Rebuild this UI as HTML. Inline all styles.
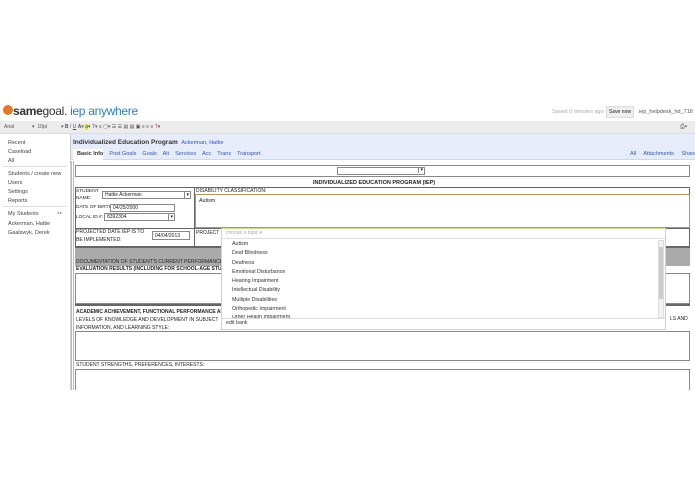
<!DOCTYPE html>
<html><head><meta charset="utf-8"><style>
*{margin:0;padding:0;box-sizing:border-box}
body{width:695px;height:494px;background:#fff;font-family:"Liberation Sans",Arial,sans-serif;font-size:6px;color:#222;position:relative;overflow:hidden}
.a{position:absolute;white-space:nowrap}
.bl{color:#3355bb}
.b{font-weight:bold}
.box{position:absolute;border:1px solid #888;background:#fff}
</style></head><body>
<!-- header -->
<div class="a" style="left:3px;top:105px;width:10px;height:10px;border-radius:50%;background:#e07a2a"></div>
<div class="a" style="left:13px;top:104px;font-size:12px;letter-spacing:-0.3px"><span class="b" style="color:#333">same</span><span style="color:#333">goal.</span><span style="color:#2e7bc4"> iep anywhere</span></div>
<div class="a" style="left:552px;top:109px;color:#aaa;font-size:5.5px">Saved 0 minutes ago</div>
<div class="a" style="left:606px;top:106px;width:28px;height:12px;background:#eee;border:1px solid #ddd;font-size:5px;line-height:10px;text-align:center">Save now</div>
<div class="a" style="left:639px;top:109px;color:#555;font-size:5.5px">iep_helpdesk_hd_718</div>
<!-- toolbar -->
<div class="a" style="left:0;top:121px;width:695px;height:13px;background:#ececec;border-bottom:1px solid #ddd"></div>
<div class="a" style="left:4px;top:124px;color:#555;font-size:5px">Arial&nbsp;&nbsp;&nbsp;&nbsp;&nbsp;&nbsp;&nbsp;&nbsp;&nbsp;&nbsp;&nbsp;&nbsp;&nbsp;▾ &nbsp;10pt&nbsp;&nbsp;&nbsp;&nbsp;&nbsp;&nbsp;&nbsp;&nbsp;&nbsp;&nbsp;▾ <b>B</b> <i>I</i> <u>U</u> <b>A</b>▾ <span style="background:#ee0">a</span>▾ <i>T</i>▾ ≡ ▢▾ ☰ ☰ ▤ ▤ ▣ ≡ ≡ ≡ <span style="color:#c33">T</span>▾</div>
<div class="a" style="left:680px;top:124px;color:#555;font-size:6px">⎙▾</div>
<!-- sidebar -->
<div class="a" style="left:70px;top:134px;width:1px;height:256px;background:#ccc"></div>
<div class="a" style="left:8px;top:139px;line-height:9px;color:#444;font-size:5.5px">Recent<br>Caseload<br>All</div>
<div class="a" style="left:3px;top:166px;width:64px;height:1px;background:#ddd"></div>
<div class="a" style="left:8px;top:170px;line-height:9px;color:#444;font-size:5.5px">Students / create new<br>Users<br>Settings<br>Reports</div>
<div class="a" style="left:3px;top:206px;width:64px;height:1px;background:#ddd"></div>
<div class="a" style="left:8px;top:210px;line-height:9.5px;color:#444;font-size:5.5px">My Students<br>Ackerman, Hattie<br>Gaalswyk, Derek</div>
<div class="a" style="left:57px;top:210px;font-size:4px;color:#777">◂ ▸</div>
<!-- main header -->
<div class="a" style="left:71px;top:134px;width:624px;height:26px;background:#e6ecf9;border-bottom:1px solid #cdd"></div>
<div class="a" style="left:73px;top:139px;font-size:6.5px"><b style="color:#333">Individualized Education Program</b> &nbsp;<span class="bl" style="font-size:5.5px">Ackerman, Hattie</span></div>
<div class="a" style="left:73px;top:149px;width:30px;height:11px;background:#fff"></div>
<div class="a" style="left:77px;top:151px;font-size:5.5px"><b style="color:#333">Basic Info</b>&nbsp;&nbsp;&nbsp; <span class="bl">Post Goals&nbsp;&nbsp;&nbsp; Goals&nbsp;&nbsp;&nbsp; Alt&nbsp;&nbsp;&nbsp; Services&nbsp;&nbsp;&nbsp; Acc&nbsp;&nbsp;&nbsp; Trans&nbsp;&nbsp;&nbsp; Transport</span></div>
<div class="a bl" style="left:630px;top:151px;font-size:5.5px;word-spacing:6px">All Attachments Share</div>
<!-- content -->
<div class="a" style="left:71px;top:161px;width:3px;height:229px;border-left:1px solid #bbb;border-right:1px solid #bbb"></div>
<div class="box" style="left:75px;top:165px;width:615px;height:12px"></div>
<div class="box" style="left:337px;top:167px;width:88px;height:8px"><span class="a" style="right:0;top:-1px;font-size:5px;border-left:1px solid #888;padding:0 1px">▾</span></div>
<div class="a b" style="left:313px;top:180px;font-size:5.5px">INDIVIDUALIZED EDUCATION PROGRAM (IEP)</div>
<div class="box" style="left:75px;top:187px;width:615px;height:60px;border-color:#666"></div>
<div class="a" style="left:194px;top:187px;width:1px;height:60px;background:#666"></div>
<div class="a" style="left:75px;top:228px;width:615px;height:1px;background:#666"></div>
<div class="a" style="left:76px;top:188px;line-height:7px;font-size:4.8px">STUDENT<br>NAME:</div>
<div class="box" style="left:102px;top:191px;width:89px;height:8px;font-size:5px;padding-left:2px;line-height:7px">Hattie Ackerman<span class="a" style="right:0;top:0;border-left:1px solid #888;padding:0 1px">▾</span></div>
<div class="a" style="left:76px;top:205px;font-size:4.8px">DATE OF BIRTH:</div>
<div class="box" style="left:110px;top:204px;width:65px;height:8px;font-size:5px;padding-left:2px;line-height:7px">04/25/2000</div>
<div class="a" style="left:76px;top:215px;font-size:4.8px">LOCAL ID #:</div>
<div class="box" style="left:104px;top:213px;width:71px;height:8px;font-size:5px;padding-left:2px;line-height:7px">8392304<span class="a" style="right:0;top:0;border-left:1px solid #888;padding:0 1px">▾</span></div>
<div class="a" style="left:196px;top:188px;font-size:5px">DISABILITY CLASSIFICATION:</div>
<div class="box" style="left:195px;top:194px;width:495px;height:34px;border-color:#b8945a;font-size:5.3px;padding:3px">Autism</div>
<div class="a" style="left:76px;top:229px;line-height:7.5px;font-size:5px">PROJECTED DATE IEP IS TO<br>BE IMPLEMENTED:</div>
<div class="box" style="left:152px;top:231px;width:38px;height:9px;font-size:5px;padding-left:2px;line-height:8px">04/04/2013</div>
<div class="a" style="left:196px;top:230px;font-size:5px">PROJECT</div>
<div class="a" style="left:75px;top:246px;width:615px;height:20px;background:#aaa;border-top:2px solid #666"></div>
<div class="a" style="left:76px;top:259px;font-size:5px">DOCUMENTATION OF STUDENT'S CURRENT PERFORMANCE</div>
<div class="a b" style="left:76px;top:266px;font-size:5px">EVALUATION RESULTS (INCLUDING FOR SCHOOL-AGE STUDENTS</div>
<div class="box" style="left:75px;top:273px;width:615px;height:31px"></div>
<div class="a" style="left:75px;top:304px;width:615px;height:2px;background:#666"></div>
<div class="a" style="left:76px;top:308px;line-height:8px;font-size:5px"><b>ACADEMIC ACHIEVEMENT, FUNCTIONAL PERFORMANCE AND</b><br>LEVELS OF KNOWLEDGE AND DEVELOPMENT IN SUBJECT<br>INFORMATION, AND LEARNING STYLE:</div>
<div class="a" style="left:670px;top:316px;font-size:5px">LS AND</div>
<div class="box" style="left:75px;top:331px;width:615px;height:30px"></div>
<div class="a" style="left:76px;top:362px;font-size:5px">STUDENT STRENGTHS, PREFERENCES, INTERESTS:</div>
<div class="box" style="left:75px;top:369px;width:615px;height:21px;border-bottom:none"></div>
<!-- dropdown -->
<div class="a" style="left:221px;top:228px;width:445px;height:102px;background:#fff;border:1px solid #c6e08e"></div>
<div class="a" style="left:226px;top:230px;font-size:5px;color:#aaa">choose a topic ▾</div>
<div class="a" style="left:221px;top:238px;width:445px;height:1px;background:#ddd"></div>
<div class="a" style="left:232px;top:240px;line-height:9.3px;font-size:5.3px;color:#333">Autism<br>Deaf Blindness<br>Deafness<br>Emotional Disturbance<br>Hearing Impairment<br>Intellectual Disability<br>Multiple Disabilities<br>Orthopedic Impairment</div>
<div class="a" style="left:232px;top:315px;width:60px;height:3px;overflow:hidden;font-size:5.3px;color:#333;line-height:4px">Other Health Impairment</div>
<div class="a" style="left:658px;top:240px;width:6px;height:78px;background:#f2f2f2;border:1px solid #ddd"></div>
<div class="a" style="left:659px;top:247px;width:4px;height:52px;background:#ccc"></div>
<div class="a" style="left:221px;top:318px;width:445px;height:1px;background:#ddd"></div>
<div class="a" style="left:226px;top:320px;font-size:5.3px;color:#333">edit bank</div>
<!-- bottom cut -->
<div class="a" style="left:0;top:390px;width:695px;height:104px;background:#fff"></div>
</body></html>
